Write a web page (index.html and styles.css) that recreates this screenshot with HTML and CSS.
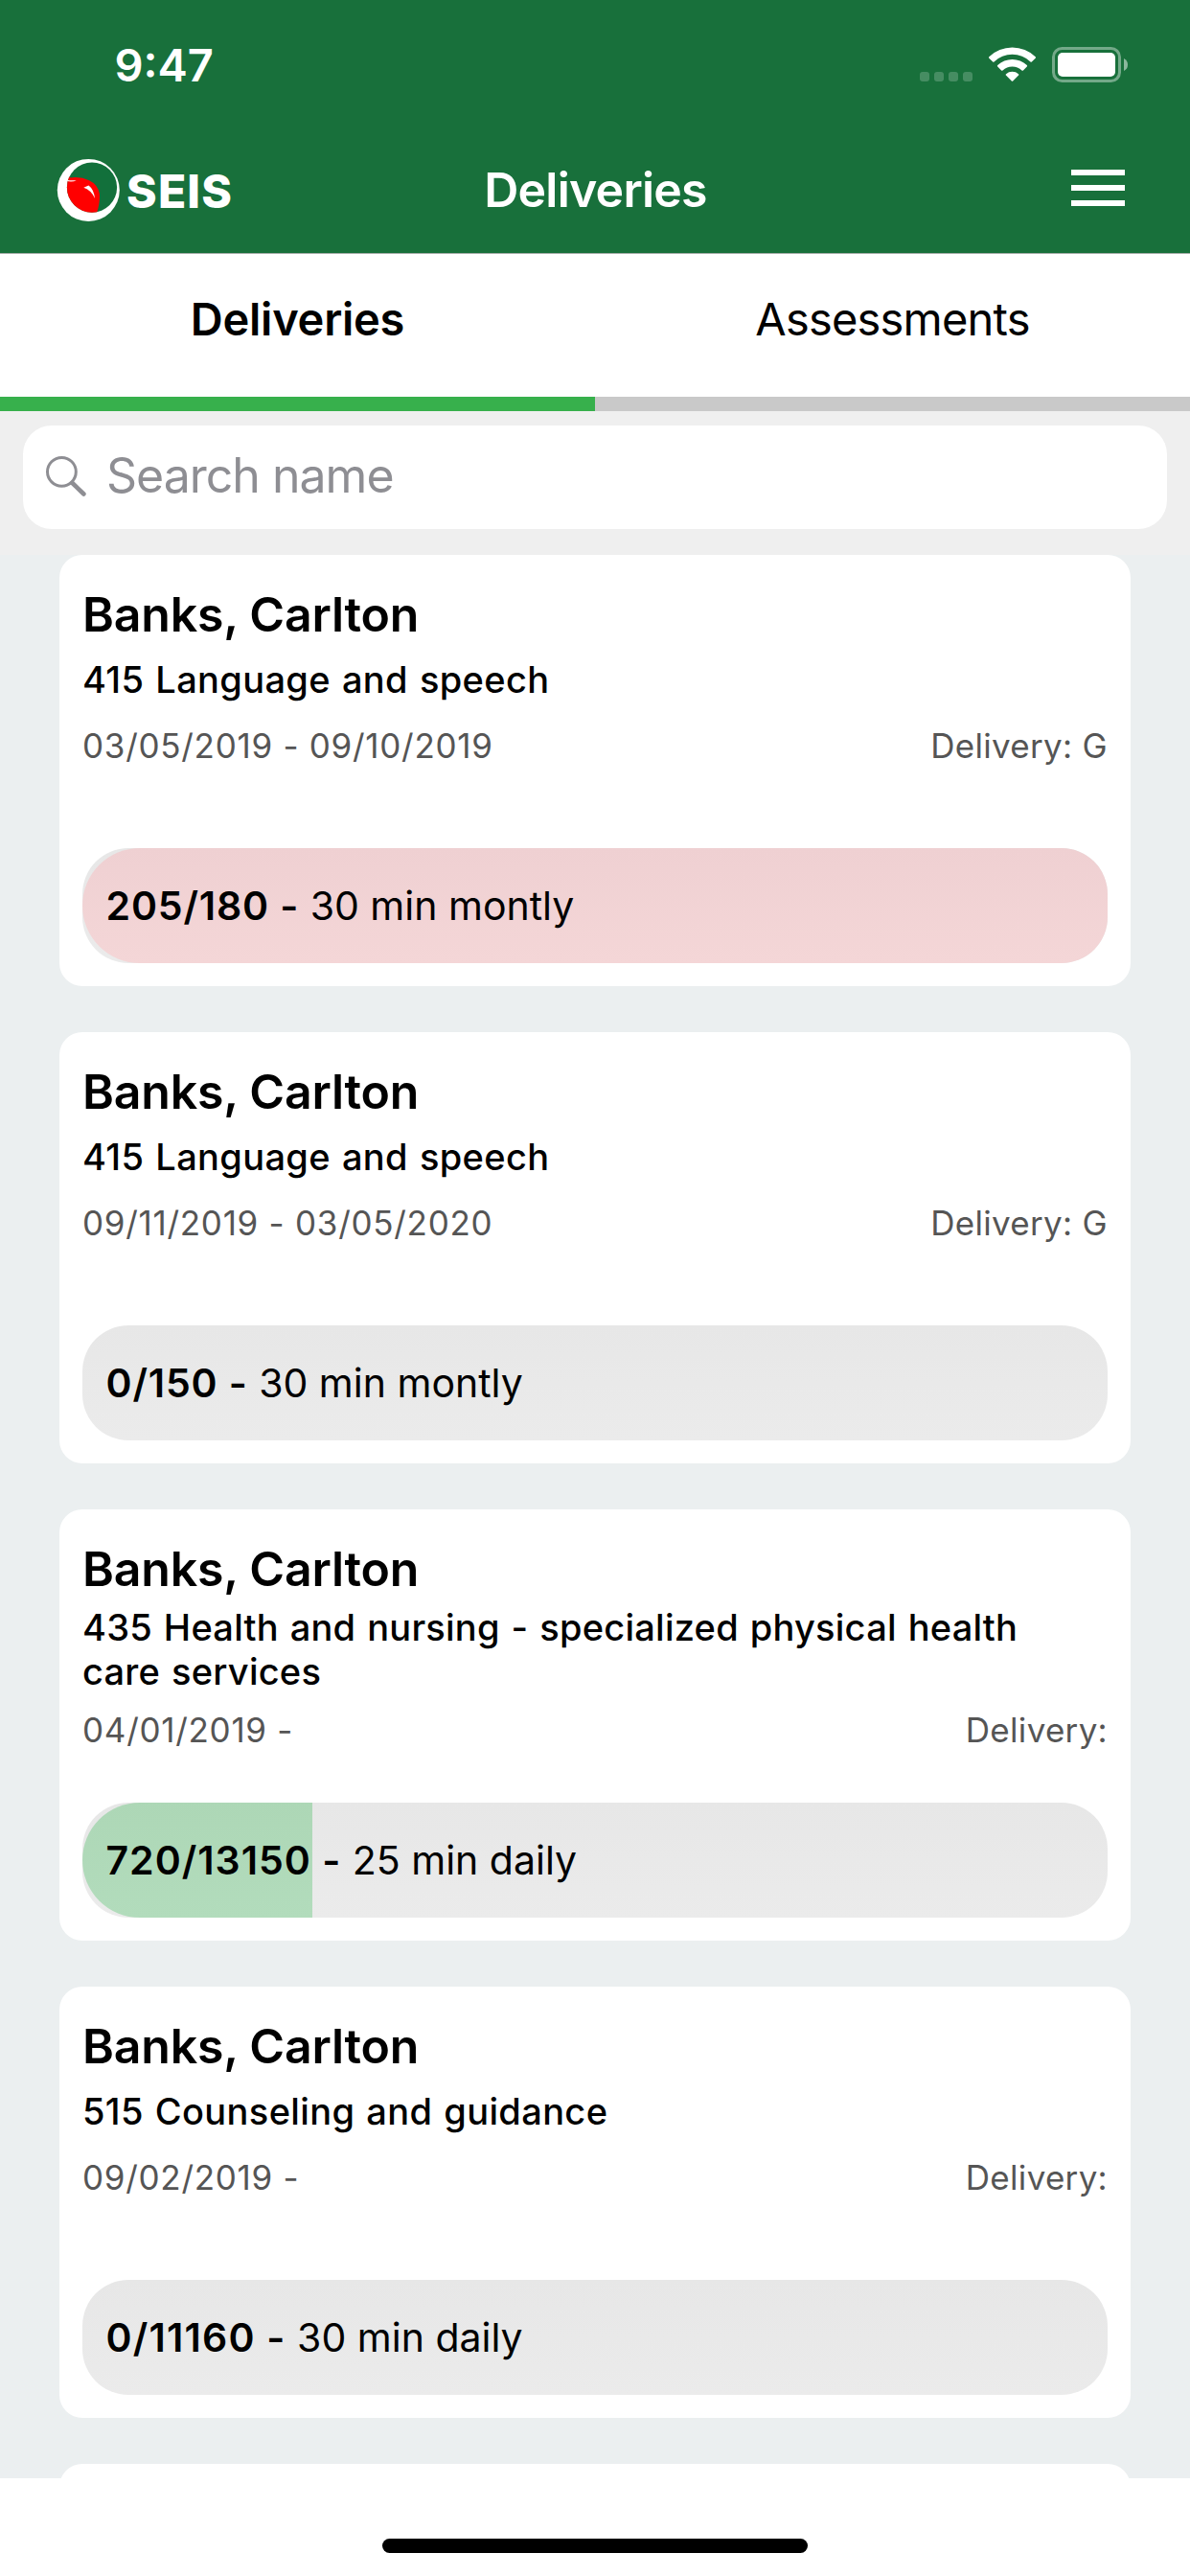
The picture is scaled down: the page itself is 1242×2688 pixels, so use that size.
FILE: index.html
```html
<!DOCTYPE html>
<html lang="en">
<head>
<meta charset="utf-8">
<title>Deliveries</title>
<link rel="stylesheet" href="styles.css">
</head>
<body>
<div class="screen">
  <header class="top">
    <div class="status">
      <span class="status__time">9:47</span>
      <svg class="status__icons" width="218" height="38" viewBox="0 0 218 38" fill="#fff">
        <g opacity=".2">
          <rect x="0" y="26" width="10" height="10" rx="3"/>
          <rect x="15" y="26" width="10" height="10" rx="3"/>
          <rect x="30" y="26" width="10" height="10" rx="3"/>
          <rect x="45" y="26" width="10" height="10" rx="3"/>
        </g>
        <path d="M72.3 10.2A35 35 0 0 1 120.7 10.2Q121.4 11 120.7 11.7L116.8 15.6Q116.2 16.1 115.5 15.5A27.3 27.3 0 0 0 77.5 15.5Q76.8 16.1 76.2 15.6L72.3 11.7Q71.6 11 72.3 10.2Z"/>
        <path d="M81.2 19.1A22.3 22.3 0 0 1 111.8 19.1Q112.5 19.9 111.8 20.6L107.9 24.5Q107.2 25 106.5 24.5A14.5 14.5 0 0 0 86.5 24.5Q85.8 25 85.1 24.5L81.2 20.6Q80.5 19.9 81.2 19.1Z"/>
        <path d="M90 28.2A10 10 0 0 1 103 28.2Q103.8 28.9 103.1 29.6L97.2 35.5Q96.5 36.1 95.8 35.5L89.9 29.6Q89.2 28.9 90 28.2Z"/>
        <rect x="139.5" y="1.5" width="69" height="34" rx="9" fill="none" stroke="#fff" stroke-width="3" opacity=".4"/>
        <rect x="144" y="6" width="60" height="25" rx="5"/>
        <path d="M213 12Q217 14 217 18.5T213 25Z" opacity=".5"/>
      </svg>
    </div>
    <nav class="nav">
      <div class="brand">
        <svg class="brand__mark" width="80" height="80" viewBox="0 0 80 80">
          <clipPath id="disc"><circle cx="44" cy="37.6" r="26.1"/></clipPath>
          <circle cx="40.3" cy="40.4" r="32.5" fill="#fff"/>
          <circle cx="44" cy="37.6" r="26.1" fill="#12703b"/>
          <g clip-path="url(#disc)">
            <path d="M14 28L20 25.7L21.5 27.5Q32 26 41 30.3Q50 34.5 51.8 44Q52.8 53 48.5 66L14 66Z" fill="#f00"/>
            <path d="M17 29.4Q21 30.6 27.8 30.2Q23.5 32.2 17 30.8Z" fill="#fff"/>
            <path d="M35.3 37.7L40.5 35.6Q45.8 39.5 47 49Q43.5 40.5 35.3 37.7Z" fill="#fff"/>
          </g>
        </svg>
        <span class="brand__name">SEIS</span>
      </div>
      <h1 class="nav__title">Deliveries</h1>
      <div class="menu"><i></i><i></i><i></i></div>
    </nav>
  </header>

  <div class="tabs">
    <div class="tab tab--active">Deliveries</div>
    <div class="tab">Assessments</div>
  </div>

  <div class="search">
    <div class="search__box">
      <svg class="search__icon" width="48" height="48" viewBox="0 0 48 48" fill="none" stroke="#8e8e93" stroke-linecap="round">
        <circle cx="20.4" cy="20.3" r="14.9" stroke-width="3"/>
        <path d="M31.5 32L43.4 43.5" stroke-width="4.6"/>
      </svg>
      <span class="search__hint">Search name</span>
    </div>
  </div>

  <main class="list">
    <article class="card">
      <h2 class="card__name">Banks, Carlton</h2>
      <p class="card__service">415 Language and speech</p>
      <div class="card__meta"><span>03/05/2019 - 09/10/2019</span><span class="card__delivery">Delivery: G</span></div>
      <div class="meter"><div class="meter__fill meter__fill--over" style="width:100%"></div><p class="meter__text"><b>205/180 -</b> 30 min montly</p></div>
    </article>
    <article class="card">
      <h2 class="card__name">Banks, Carlton</h2>
      <p class="card__service">415 Language and speech</p>
      <div class="card__meta"><span>09/11/2019 - 03/05/2020</span><span class="card__delivery">Delivery: G</span></div>
      <div class="meter"><p class="meter__text"><b>0/150 -</b> 30 min montly</p></div>
    </article>
    <article class="card card--long">
      <h2 class="card__name">Banks, Carlton</h2>
      <p class="card__service">435 Health and nursing - specialized physical health care services</p>
      <div class="card__meta"><span>04/01/2019 -</span><span class="card__delivery">Delivery:</span></div>
      <div class="meter"><div class="meter__fill" style="width:240px"></div><p class="meter__text meter__text--long"><b>720/13150 -</b> 25 min daily</p></div>
    </article>
    <article class="card">
      <h2 class="card__name">Banks, Carlton</h2>
      <p class="card__service">515 Counseling and guidance</p>
      <div class="card__meta"><span>09/02/2019 -</span><span class="card__delivery">Delivery:</span></div>
      <div class="meter"><p class="meter__text meter__text--wide"><b>0/11160 -</b> 30 min daily</p></div>
    </article>
    <article class="card"></article>
  </main>

  <footer class="home"><div class="home__bar"></div></footer>
</div>
</body>
</html>
```
FILE: styles.css
```css
* { box-sizing: border-box; margin: 0; padding: 0; }

body {
  font-family: Inter, "Liberation Sans", sans-serif;
  color: #000;
  background: #fff;
}

.screen {
  width: 1242px;
  height: 2688px;
  display: flex;
  flex-direction: column;
  overflow: hidden;
}

.top {
  flex: none;
  height: 265px;
  background: #18703b;
  border-bottom: 1px solid #a9afab;
  color: #fff;
}

.status {
  height: 132px;
  padding: 0 64px 0 119.5px;
  display: flex;
  justify-content: space-between;
  align-items: flex-start;
}
.status__time {
  font-size: 47px;
  font-weight: 600;
  line-height: 136px;
}
.status__icons { margin-top: 49px; }

.nav {
  height: 132px;
  padding: 0 68px 0 52px;
  display: grid;
  grid-template-columns: 1fr auto 1fr;
  align-items: center;
}
.brand { display: flex; align-items: center; }
.brand__name {
  font-size: 48px;
  font-weight: 800;
  line-height: 80px;
  letter-spacing: 1.2px;
  padding-top: 4px;
}
.nav__title {
  font-size: 50px;
  font-weight: 600;
  line-height: 132px;
  letter-spacing: -0.77px;
  margin-left: 17px;
}
.menu {
  justify-self: end;
  width: 56px;
  display: grid;
  gap: 10px;
  margin-bottom: 4px;
}
.menu i { height: 6px; background: #fff; }

.tabs {
  flex: none;
  display: grid;
  grid-template-columns: 1fr 1fr;
  height: 164px;
}
.tab {
  border-bottom: 15px solid #c9c9c9;
  text-align: center;
  font-size: 47px;
  line-height: 136px;
  letter-spacing: -0.8px;
}
.tab--active {
  border-color: #37b04c;
  font-weight: 600;
  letter-spacing: -0.25px;
}

.search {
  flex: none;
  height: 150px;
  padding: 15px 24px 27px;
  background: #efefef;
}
.search__box {
  height: 108px;
  display: flex;
  align-items: flex-start;
  gap: 19px;
  padding-left: 20px;
  background: #fff;
  border-radius: 30px;
}
.search__icon { margin-top: 28px; }
.search__hint {
  font-size: 50px;
  line-height: 104px;
  letter-spacing: -1px;
  color: #8e8e93;
}

.list {
  flex: 1;
  min-height: 0;
  overflow: hidden;
  display: flex;
  flex-direction: column;
  gap: 48px;
  padding: 0 62px;
  background: #ebeff0;
}

.card {
  flex: none;
  height: 450px;
  padding: 32px 24px 24px;
  display: flex;
  flex-direction: column;
  background: #fff;
  border-radius: 24px;
}
.card__name {
  font-size: 50px;
  font-weight: 600;
  line-height: 60px;
  letter-spacing: -0.2px;
}
.card__service {
  margin: 15px 0 23px;
  padding-right: 24px;
  font-size: 38px;
  font-weight: 500;
  line-height: 46px;
  letter-spacing: 0.36px;
  word-spacing: 1.5px;
}
.card--long .card__service {
  margin: 8px 0 15px;
  letter-spacing: 0.24px;
}
.card__meta {
  display: flex;
  justify-content: space-between;
  font-size: 35px;
  line-height: 46px;
  letter-spacing: 0.72px;
  color: #555;
}
.card__delivery { letter-spacing: 0.3px; }

.meter {
  display: grid;
  height: 120px;
  margin-top: auto;
  border-radius: 48px;
  overflow: hidden;
  background: linear-gradient(#e7e7e7, #ebebeb);
}
.meter__fill,
.meter__text { grid-area: 1 / 1; }
.meter__fill {
  border-radius: 60px 0 0 60px;
  background: linear-gradient(#add7b6, #b2dcbc);
}
.meter__fill--over { background: linear-gradient(#efd0d2, #f4d6d7); }
.meter__text {
  padding-left: 24.5px;
  font-size: 41px;
  line-height: 120px;
}
.meter__text b { font-weight: 600; letter-spacing: 0.85px; }
.meter__text--long b { letter-spacing: 1px; }
.meter__text--wide b { letter-spacing: 1.2px; }

.home {
  flex: none;
  height: 102px;
  padding-top: 63px;
  background: #fff;
}
.home__bar {
  width: 444px;
  height: 15px;
  margin: 0 auto;
  border-radius: 8px;
  background: #000;
}
```
